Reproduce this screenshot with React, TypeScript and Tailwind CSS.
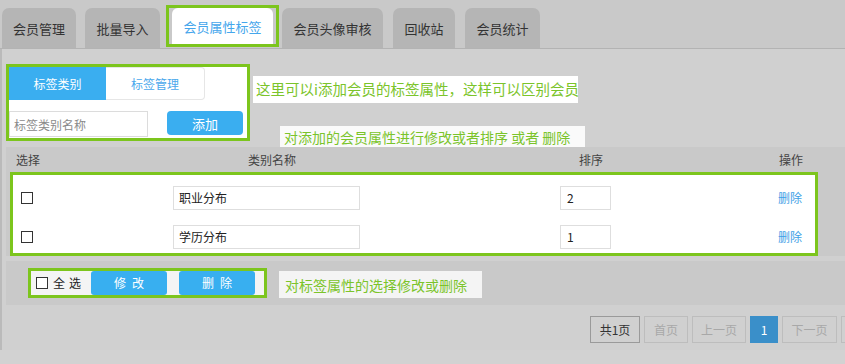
import React from "react"

const TABS = [
  { label: "会员管理", w: "w-[74px]", ml: "ml-0" },
  { label: "批量导入", w: "w-[75px]", ml: "ml-[9px]" },
  { label: "会员属性标签", w: "w-[113px]", ml: "ml-[6px]", active: true },
  { label: "会员头像审核", w: "w-[101px]", ml: "ml-[3px]" },
  { label: "回收站", w: "w-[62px]", ml: "ml-[10px]" },
  { label: "会员统计", w: "w-[75px]", ml: "ml-[10px]" },
]

const ROWS = [
  { name: "职业分布", sort: "2" },
  { name: "学历分布", sort: "1" },
]

const PAGES = [
  { label: "共1页", cls: "w-[50px] border-[#9a9a9a] text-[#333]" },
  { label: "首页", cls: "w-[44px] border-[#bdbdbd] text-[#a8a8a8]" },
  { label: "上一页", cls: "w-[54px] border-[#bdbdbd] text-[#a8a8a8]" },
  { label: "1", cls: "w-[28px] border-[#3a8fc9] bg-[#3a8fc9] text-white" },
  { label: "下一页", cls: "w-[55px] border-[#bdbdbd] text-[#a8a8a8]" },
  { label: "", cls: "w-[44px] border-[#bdbdbd] text-[#a8a8a8]" },
]

function Box() {
  return <span className="block h-[12px] w-[12px] border-[1.5px] border-[#333] bg-white" />
}

export default function App() {
  return (
    <div className="h-[364px] w-[845px] overflow-hidden bg-[#d2d2d2] font-['Noto_Sans_CJK_SC','Noto_Sans',sans-serif] text-[12px] leading-none">
      {/* tab strip */}
      <div className="flex h-[49px] items-end border-b border-[#b3b3b3] bg-[#c9c9c9] pl-[2px]">
        {TABS.map((t) =>
          t.active ? (
            <div
              key={t.label}
              className={`${t.w} ${t.ml} mb-px flex h-[42px] items-end border-[3px] border-[#7cc51d] px-[3px]`}
            >
              <div className="flex h-[36px] w-full items-center justify-center rounded-t-[6px] bg-white text-[13px] text-[#45a6ec]">
                {t.label}
              </div>
            </div>
          ) : (
            <div
              key={t.label}
              className={`${t.w} ${t.ml} flex h-[40px] items-center justify-center rounded-t-[7px] bg-[#b5b5b5] text-[13px] text-[#333]`}
            >
              {t.label}
            </div>
          )
        )}
      </div>

      {/* panel */}
      <div className="flex h-[301px] flex-col border-l-2 border-[#bababa] bg-[#d0d0d0]">
        {/* tag category form + notes */}
        <div className="mt-[15px] flex h-[83px] items-start">
          <div className="ml-[4px] h-[77px] w-[244px] border-[3px] border-[#7cc51d] bg-white">
            <div className="flex h-[33px]">
              <div className="flex w-[97px] items-center justify-center bg-[#3aaef0] text-white">标签类别</div>
              <div className="flex w-[99px] items-center justify-center rounded-r-[4px] border border-l-0 border-[#e6e6e6] text-[#4aa8ec]">
                标签管理
              </div>
            </div>
            <div className="mt-[11px] flex items-start">
              <input
                className="h-[26px] w-[139px] border border-[#dcdcdc] bg-white px-[4px] text-[12px] outline-none placeholder:text-[#8a8a8a]"
                placeholder="标签类别名称"
              />
              <button className="ml-[19px] h-[24px] w-[76px] rounded-[4px] bg-[#3aaef0] text-[13px] text-white">添加</button>
            </div>
          </div>
          <div className="flex flex-col items-start">
            <div className="ml-[3px] mt-[12px] flex h-[27px] w-[325px] items-center whitespace-nowrap bg-white pl-[3px] text-[14.5px] text-[#7bc42a]">
              这里可以i添加会员的标签属性，这样可以区别会员
            </div>
            <div className="ml-[30px] mt-[23px] flex h-[21px] w-[305px] items-center whitespace-nowrap bg-white/90 pl-[4px] text-[14px] text-[#7bc42a]">
              对添加的会员属性进行修改或者排序 或者 删除
            </div>
          </div>
        </div>

        {/* table */}
        <div className="ml-[4px] bg-[#c9c9c9]">
          <div className="flex h-[25px] items-center pl-[10px] text-[#444]">
            <span className="w-[24px]">选择</span>
            <span className="ml-[208px]">类别名称</span>
            <span className="ml-[283px]">排序</span>
            <span className="ml-[176px]">操作</span>
          </div>
          <div className="ml-[4px] flex w-[808px] flex-col gap-[15px] border-[3px] border-[#7cc51d] bg-white pb-[4px] pt-[11px]">
            {ROWS.map((r) => (
              <div key={r.name} className="flex h-[24px] items-center">
                <span className="ml-[8px]">
                  <Box />
                </span>
                <div className="ml-[140px] flex h-[24px] w-[187px] items-center border border-[#dedede] pl-[5px] text-[#222]">
                  {r.name}
                </div>
                <div className="ml-[200px] flex h-[24px] w-[51px] items-center border border-[#dedede] pl-[6px] text-[#222]">
                  {r.sort}
                </div>
                <a className="ml-[167px] text-[#3ea0e6]">删除</a>
              </div>
            ))}
          </div>
        </div>

        {/* bulk actions */}
        <div className="ml-[4px] mt-[5px] flex h-[44px] items-start bg-[#c9c9c9] pt-[7px]">
          <div className="ml-[22px] flex h-[30px] w-[239px] items-center border-[3px] border-[#7cc51d] bg-[#f4f4f4] pl-[5px]">
            <Box />
            <span className="ml-[5px] tracking-[4px] text-[#222]">全选</span>
            <button className="ml-[6px] h-[24px] w-[76px] rounded-[3px] bg-[#38aff0] pl-[6px] tracking-[6px] text-white">修改</button>
            <button className="ml-[12px] h-[24px] w-[76px] rounded-[3px] bg-[#38aff0] pl-[6px] tracking-[6px] text-white">删除</button>
          </div>
          <div className="ml-[12px] mt-[3px] flex h-[27px] w-[203px] items-center bg-[#f4f4f4] pl-[6px] text-[14px] text-[#7bc42a]">
            对标签属性的选择修改或删除
          </div>
        </div>

        {/* pager */}
        <div className="mt-[11px] flex gap-[4px] pl-[588px]">
          {PAGES.map((p, i) => (
            <span key={i} className={`flex h-[27px] shrink-0 items-center justify-center border ${p.cls}`}>
              {p.label}
            </span>
          ))}
        </div>
      </div>
    </div>
  )
}
